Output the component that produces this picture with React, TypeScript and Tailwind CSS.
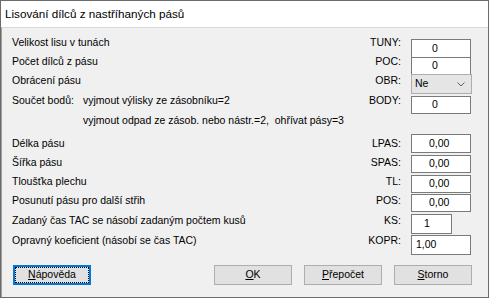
import { ReactNode } from 'react';

const font = { fontFamily: '"Liberation Sans", Arial, sans-serif' };

type Field = {
  label: ReactNode;
  code?: string;
  value?: string;
  kind?: 'text' | 'select' | 'none';
  boxW?: number;
  pad?: number;
  h: number;
  labelMt: number;
  boxMt: number;
  boxH?: number;
};

const rows: Field[] = [
  { label: 'Velikost lisu v tunách', code: 'TUNY:', value: '0', pad: 20, h: 19, labelMt: 0, boxMt: 3 },
  { label: 'Počet dílců z pásu', code: 'POC:', value: '0', pad: 20, h: 19, labelMt: 0, boxMt: 2, boxH: 18 },
  { label: 'Obrácení pásu', code: 'OBR:', value: 'Ne', kind: 'select', h: 20, labelMt: 0, boxMt: 0, boxH: 20 },
  {
    label: (
      <div className="flex">
        <span className="w-[71px]">Součet bodů:</span>
        <span>vyjmout výlisky ze zásobníku=2</span>
      </div>
    ),
    code: 'BODY:', value: '0', pad: 20, h: 20, labelMt: 0, boxMt: 2, boxH: 18,
  },
  {
    label: (
      <div className="flex">
        <span className="w-[71px]"></span>
        <span className="whitespace-pre">vyjmout odpad ze zásob. nebo nástr.=2,  ohřívat pásy=3</span>
      </div>
    ),
    kind: 'none', h: 20, labelMt: 0, boxMt: 0,
  },
  { label: 'Délka pásu', code: 'LPAS:', value: '0,00', pad: 17, h: 21, labelMt: 3, boxMt: 0 },
  { label: 'Šířka pásu', code: 'SPAS:', value: '0,00', pad: 17, h: 20, labelMt: 1, boxMt: 0, boxH: 18 },
  { label: 'Tloušťka plechu', code: 'TL:', value: '0,00', pad: 17, h: 19, labelMt: 0, boxMt: 0, boxH: 18 },
  { label: 'Posunutí pásu pro další střih', code: 'POS:', value: '0,00', pad: 17, h: 20, labelMt: 0, boxMt: 0, boxH: 18 },
  { label: 'Zadaný čas TAC se násobí zadaným počtem kusů', code: 'KS:', value: '1', pad: 12, boxW: 41, h: 20, labelMt: 0, boxMt: 0, boxH: 20 },
  { label: 'Opravný koeficient (násobí se čas TAC)', code: 'KOPR:', value: '1,00', pad: 4, h: 21, labelMt: 0, boxMt: 1, boxH: 20 },
];

function Row({ f }: { f: Field }) {
  const kind = f.kind ?? 'text';
  return (
    <div className="flex items-start" style={{ height: f.h }}>
      <div className="flex-1 leading-[13px]" style={{ marginTop: f.labelMt }}>
        {f.label}
      </div>
      {kind !== 'none' && (
        <div className="flex items-start">
          <div className="w-[80px] text-right leading-[13px]" style={{ marginTop: f.labelMt }}>
            {f.code}
          </div>
          <div className="ml-[10px] w-[61px]" style={{ marginTop: f.boxMt }}>
            {kind === 'select' ? (
              <div className="h-[20px] w-[61px] bg-[#e5e5e5] border border-[#adadad] flex items-center justify-between pl-[3px] pr-[6px]">
                <span>Ne</span>
                <svg width="8" height="5" viewBox="0 0 8 5">
                  <path d="M0.5 0.5 L4 4 L7.5 0.5" fill="none" stroke="#606060" strokeWidth="1" />
                </svg>
              </div>
            ) : (
              <div
                className="bg-white border border-[#7a7a7a] flex items-center"
                style={{ width: f.boxW ?? 60, height: f.boxH ?? 19, paddingLeft: f.pad }}
              >
                {f.value}
              </div>
            )}
          </div>
        </div>
      )}
    </div>
  );
}

function Btn({ children, focused }: { children: ReactNode; focused?: boolean }) {
  return (
    <div
      className={`w-[78px] h-[20px] bg-[#e1e1e1] flex items-center justify-center ${
        focused ? 'border-2 border-[#0078d7]' : 'border border-[#adadad]'
      }`}
    >
      {focused ? (
        <div className="w-full h-full border border-dotted border-black flex items-center justify-center">
          {children}
        </div>
      ) : (
        children
      )}
    </div>
  );
}

export default function App() {
  return (
    <div className="w-[489px] h-[298px] border border-[#6b6b6b] bg-[#f0f0f0] flex flex-col text-black" style={font}>
      {/* Title bar */}
      <div className="h-[26px] bg-white flex items-center pl-[4px] text-[11.7px] shrink-0">
        Lisování dílců z nastříhaných pásů
      </div>
      <div className="flex-1 border-t border-l border-[#d9d9d9] border-l-[#a0a0a0] text-[10.5px] pt-[8px] pl-[10px] pr-[16px]">
        {rows.map((f, i) => (
          <Row key={i} f={f} />
        ))}
        <div className="flex mt-[10px] pl-[1px]">
          <Btn focused>
            <span>
              <span className="underline">N</span>ápověda
            </span>
          </Btn>
          <div className="ml-[123px] flex gap-[12px]">
            <Btn>
              <span>
                <span className="underline">O</span>K
              </span>
            </Btn>
            <Btn>
              <span>
                <span className="underline">P</span>řepočet
              </span>
            </Btn>
            <Btn>
              <span>
                <span className="underline">S</span>torno
              </span>
            </Btn>
          </div>
        </div>
      </div>
    </div>
  );
}
